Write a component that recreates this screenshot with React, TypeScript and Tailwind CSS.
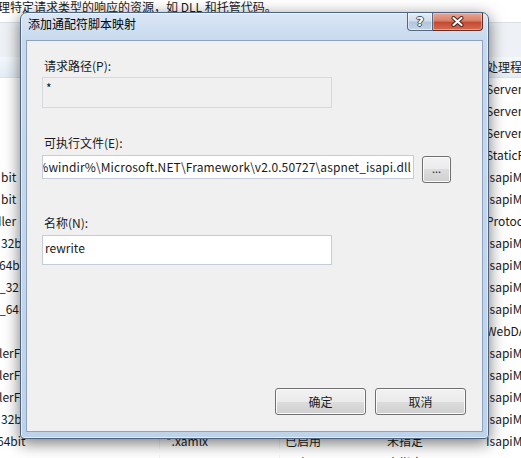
import React from 'react';

type Row = { left: string; leftShift: string; path?: string; state?: string; kind?: string; handler: string };

// rows of the handler-mapping list behind the dialog; only the parts that peek out are filled in
const rows: Row[] = [
  { left: '', leftShift: 'ml-0', handler: 'ServerSideIncludeModule' },
  { left: '', leftShift: 'ml-0', handler: 'ServerSideIncludeModule' },
  { left: '', leftShift: 'ml-0', handler: 'ServerSideIncludeModule' },
  { left: '', leftShift: 'ml-0', handler: 'StaticFileModule' },
  { left: 'bit', leftShift: 'ml-[1px]', handler: 'IsapiModule' },
  { left: 'bit', leftShift: 'ml-[1px]', handler: 'IsapiModule' },
  { left: 'dler', leftShift: '-ml-[6px]', handler: 'ProtocolSupportModule' },
  { left: '32bit', leftShift: 'ml-[1px]', handler: 'IsapiModule' },
  { left: '64bit', leftShift: '-ml-[1px]', handler: 'IsapiModule' },
  { left: '_32bit', leftShift: '-ml-[1px]', handler: 'IsapiModule' },
  { left: '_64bit', leftShift: '-ml-[1px]', handler: 'IsapiModule' },
  { left: '', leftShift: 'ml-0', handler: 'WebDAVModule' },
  { left: 'lerFactory', leftShift: '-ml-[1px]', handler: 'IsapiModule' },
  { left: 'lerFactory', leftShift: '-ml-[1px]', handler: 'IsapiModule' },
  { left: 'lerFactory', leftShift: '-ml-[1px]', handler: 'IsapiModule' },
  { left: '32bit', leftShift: 'ml-[1px]', handler: 'IsapiModule' },
  { left: '64bit', leftShift: '-ml-[3px]', path: '*.xamlx', state: '已启用', kind: '未指定', handler: 'IsapiModule' },
  { left: 'xoml', leftShift: 'ml-0', path: '*.xoml', state: '已启用', kind: '未指定', handler: 'IsapiModule' },
];

const winBtn =
  'rounded-[3px] border border-[#707070] bg-[linear-gradient(to_bottom,#f2f2f2_0%,#ebebeb_50%,#dddddd_50%,#cfcfcf_100%)] shadow-[inset_0_0_0_1px_#fbfbfb] flex items-center justify-center';

export default function App() {
  return (
    <div className="relative w-[521px] h-[458px] overflow-hidden bg-white text-[12px] text-[#1a1a1a] font-['Noto_Sans_CJK_SC','Microsoft_YaHei',sans-serif]">
      {/* page behind the dialog */}
      <div className="flex flex-col">
        <div className="h-[22px] leading-[13px] whitespace-nowrap -ml-[2px]">理特定请求类型的响应的资源，如 DLL 和托管代码。</div>
        <div className="h-px bg-[#dcdfe3]" />
        <div className="h-[34px] bg-[#eef1f5]" />
        <div className="h-[21px] flex items-center border-b border-[#dde3ea] bg-[linear-gradient(to_bottom,#f4f8fc,#e4edf6)] whitespace-nowrap">
          <span className="w-[481px] shrink-0" />
          <span className="shrink-0 pl-[5px]">处理程序</span>
        </div>
        {rows.map((r, i) => (
          <div key={i} className="h-[22px] flex items-center whitespace-nowrap leading-[16px]">
            <div className="w-[160px] shrink-0 overflow-hidden border-r border-[#f3f3f3]">
              <span className={`block ${r.leftShift}`}>{r.left}</span>
            </div>
            <div className="w-[120px] shrink-0 pl-[6px] border-r border-[#f3f3f3]">{r.path}</div>
            <div className="w-[102px] shrink-0 pl-[5px]">{r.state}</div>
            <div className="w-[99px] shrink-0 pl-[5px]">{r.kind}</div>
            <div className="shrink-0 pl-[5px]">{r.handler}</div>
          </div>
        ))}
      </div>

      {/* dialog window */}
      <div className="absolute left-[20px] top-[12px] w-[469px] h-[427px] flex flex-col rounded-t-[7px] rounded-b-[4px] border border-[#4e6380] bg-[linear-gradient(to_bottom,#d9e6f5_0px,#c8d9ee_28px,#bed2ea_100%)] shadow-[inset_0_0_0_1px_rgba(255,255,255,0.55),0_4px_16px_rgba(0,0,0,0.55)]">
        <div className="h-[27px] flex items-start shrink-0">
          <span className="mt-[3px] ml-[7px] leading-[16px] text-black">添加通配符脚本映射</span>
          <div className="ml-auto mr-[5px] flex">
            <div className="w-[26px] h-[18px] rounded-bl-[4px] border border-t-0 border-[#56677f] bg-[linear-gradient(to_bottom,#e6edf6_0%,#d2deec_45%,#b3c5db_55%,#c4d4e6_100%)] shadow-[inset_0_0_0_1px_rgba(255,255,255,0.5)] flex items-center justify-center">
              <span className="text-[13px] leading-[13px] font-bold text-white font-['DejaVu_Sans',sans-serif] [text-shadow:-1px_0_#3f4e66,1px_0_#3f4e66,0_-1px_#3f4e66,0_1px_#3f4e66]">?</span>
            </div>
            <div className="w-[50px] h-[18px] rounded-br-[4px] border border-t-0 border-l-0 border-[#6b2a22] bg-[linear-gradient(to_bottom,#e9a797_0%,#d98068_45%,#c54a32_55%,#d36c52_100%)] shadow-[inset_0_0_0_1px_rgba(255,220,210,0.45)] flex items-center justify-center">
              <svg width="13" height="11" viewBox="0 0 13 11">
                <path d="M2.5 2 L10.5 9 M10.5 2 L2.5 9" stroke="#4a1b14" strokeWidth="4" strokeLinecap="round" />
                <path d="M2.5 2 L10.5 9 M10.5 2 L2.5 9" stroke="#ffffff" strokeWidth="2.2" strokeLinecap="round" />
              </svg>
            </div>
          </div>
        </div>

        <div className="flex-1 mx-[5px] mb-[6px] bg-[#f0f0f0] shadow-[inset_0_0_0_1px_#8ea3bf] flex flex-col pl-[16px]">
          <div className="mt-[18px] ml-[2px] leading-[16px]">请求路径(P):</div>
          <div className="mt-[3px] w-[290px] h-[31px] border border-[#d5d9df] bg-[#f0f0f0] pl-[3px] pt-[2px] leading-[16px]">*</div>

          <div className="mt-[27px] ml-[2px] leading-[16px]">可执行文件(E):</div>
          <div className="mt-[4px] flex items-start">
            <div className="w-[372px] shrink-0 h-[24px] border border-[#c3ccd8] bg-white overflow-hidden flex items-center justify-end pr-[2px]">
              <span className="whitespace-nowrap shrink-0 leading-[16px] tracking-[0.12px]">%windir%\Microsoft.NET\Framework\v2.0.50727\aspnet_isapi.dll</span>
            </div>
            <div className={`${winBtn} shrink-0 ml-[8px] mt-[1px] w-[29px] h-[27px] border-[#8a8a8a]`}>
              <span className="text-[11px] leading-[11px] -mt-[2px]">...</span>
            </div>
          </div>

          <div className="mt-[32px] ml-[2px] leading-[16px]">名称(N):</div>
          <div className="mt-[4px] w-[290px] h-[30px] border border-[#c3ccd8] bg-white pl-[2px] pt-[4px] leading-[16px]">rewrite</div>

          <div className="mt-auto mb-[17px] flex">
            <div className={`${winBtn} ml-[233px] w-[91px] h-[27px] border-[#3c7fb1] shadow-[inset_0_0_0_1px_#b4e0f7]`}>确定</div>
            <div className={`${winBtn} ml-[9px] w-[91px] h-[27px]`}>取消</div>
          </div>
        </div>
      </div>
    </div>
  );
}
